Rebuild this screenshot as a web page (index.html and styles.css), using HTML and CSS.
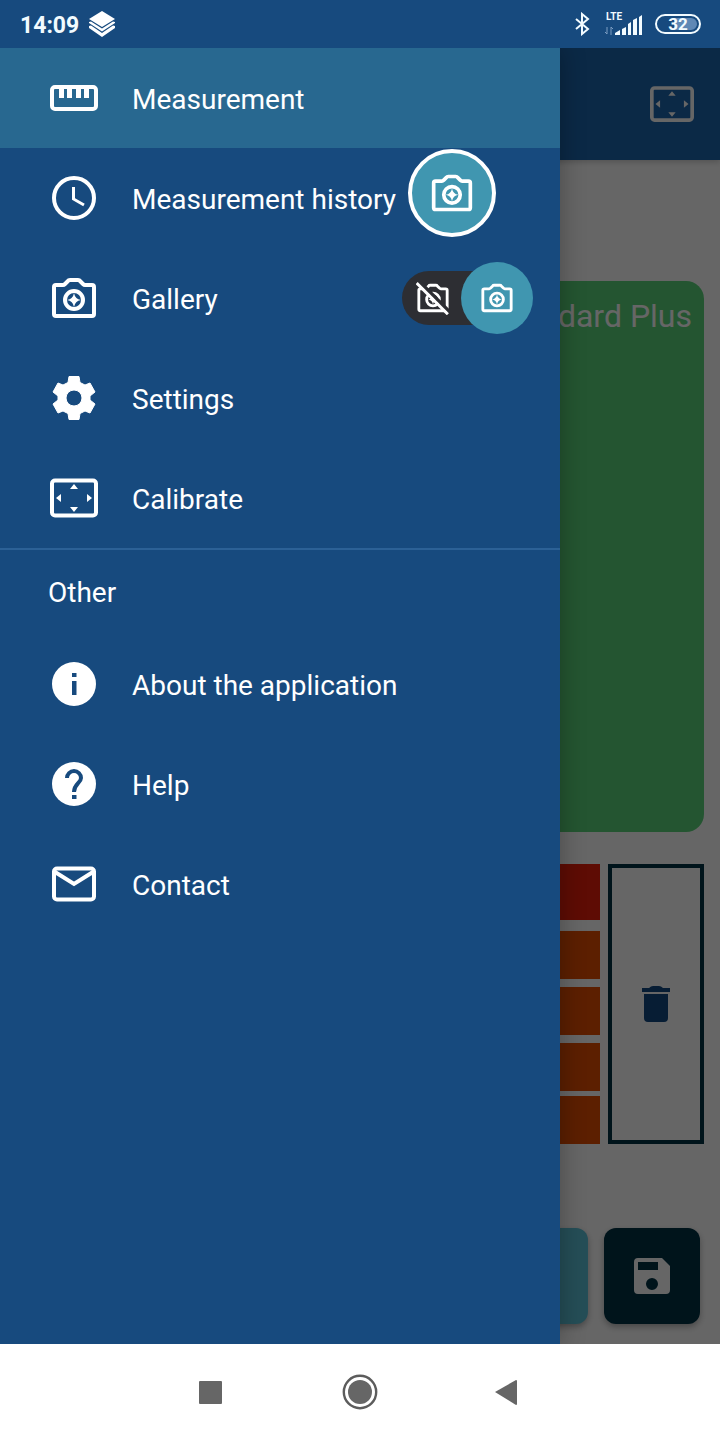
FILE: index.html
```
<!DOCTYPE html>
<html lang="en">
<head>
  <meta charset="UTF-8">
  <meta name="viewport" content="width=device-width, initial-scale=1.0">
  <title>Measurement</title>
  <link rel="stylesheet" href="styles.css">
</head>
<body>
  <!-- Shared icons -->
  <svg class="icon-defs" aria-hidden="true">
    <symbol id="icon-camera" viewBox="0 0 48 48">
      <path d="M6 11H13Q14 11 15 10L18 7Q18.500 6 20 6H28Q29.500 6 30 7L33 10Q34 11 35 11H42Q44 11 44 13V40Q44 42 42 42H6Q4 42 4 40V13Q4 11 6 11Z" fill="none" stroke="currentColor" stroke-width="4" stroke-linejoin="round"/>
      <circle cx="24" cy="26" r="9" fill="none" stroke="currentColor" stroke-width="4"/>
      <path d="M24 19Q25 25 31 26Q25 27 24 33Q23 27 17 26Q23 25 24 19Z" fill="currentColor"/>
    </symbol>
    <symbol id="icon-calibrate" viewBox="0 0 48 48">
      <rect x="2" y="6.500" width="44" height="35" rx="3" fill="none" stroke="currentColor" stroke-width="4"/>
      <path d="M24 10L28 15H20ZM24 38L28 33H20ZM6 24L11 20V28ZM42 24L37 20V28Z" fill="currentColor"/>
    </symbol>
  </svg>

  <div class="status-bar">
    <span class="clock">14:09</span>
    <svg class="layers-icon" viewBox="0 0 26 26" aria-hidden="true">
      <path d="M13 0L26 8L13 16L0 8Z"/>
      <path d="M0 11L2 10.500L13 17.500L24 10.500L26 11V12L13 20.500L0 12Z"/>
      <path d="M0 15L2 14.500L13 22L24 14.500L26 15V17L13 26L0 17Z"/>
    </svg>
    <div class="status-icons">
      <svg class="bluetooth-icon" viewBox="0 0 18 24" aria-hidden="true">
        <path d="M1 7L13 17L7 22V2L13 7L1 17" fill="none" stroke="currentColor" stroke-width="2"/>
      </svg>
      <svg class="signal-icon" viewBox="0 0 38 24" aria-hidden="true">
        <text x="1" y="8" class="signal-text">LTE</text>
        <path d="M10 23V21L15 18V23ZM17 23V17L21 15V23ZM23 23V12L26 10V23ZM28 23V8L32 6V23ZM34 23V5L37 3V23Z" fill="currentColor"/>
        <path d="M2 15V22L0 20M6 23V15L8 17" fill="none" stroke="#7c9dc2" stroke-width="1"/>
      </svg>
      <span class="battery">32</span>
    </div>
  </div>

  <div class="screen">
    <div class="page">
      <header class="app-bar">
        <button class="app-bar-button" aria-label="Calibrate">
          <svg viewBox="0 0 48 48"><use href="#icon-calibrate"/></svg>
        </button>
      </header>

      <main class="content">
        <section class="result-card">Standard Plus</section>

        <section class="readings">
          <div class="reading-list">
            <div class="reading current"></div>
            <div class="reading-group">
              <div class="reading"></div>
              <div class="reading"></div>
              <div class="reading"></div>
            </div>
            <div class="reading"></div>
          </div>
          <button class="delete-button" aria-label="Delete">
            <svg viewBox="0 0 28 36">
              <path d="M0 2H7Q9 0 11 0H17Q19 0 21 2H28V6H0ZM2 8H26V32Q26 36 22 36H6Q2 36 2 32Z" fill="currentColor"/>
            </svg>
          </button>
        </section>

        <div class="page-actions">
          <button class="measure-button" aria-label="Measure"></button>
          <button class="save-button" aria-label="Save">
            <svg viewBox="0 0 36 36">
              <path fill-rule="evenodd" d="M4 0H28L36 8V32Q36 36 32 36H4Q0 36 0 32V4Q0 0 4 0ZM4 4V12H24V4ZM18 20A6 6 0 1 0 18 32A6 6 0 1 0 18 20Z" fill="currentColor"/>
            </svg>
          </button>
        </div>
      </main>
    </div>

    <div class="scrim"></div>

    <nav class="drawer">
      <ul class="menu">
        <li class="menu-item active">
          <a href="#measurement">
            <svg viewBox="0 0 48 48" aria-hidden="true">
              <rect x="2" y="13" width="44" height="22" rx="3" fill="none" stroke="currentColor" stroke-width="4"/>
              <path d="M9 14H14V24H9ZM17 14H22V24H17ZM26 14H31V24H26ZM34 14H39V24H34Z" fill="currentColor"/>
            </svg>
            <span>Measurement</span>
          </a>
        </li>
        <li class="menu-item">
          <a href="#history">
            <svg viewBox="0 0 48 48" aria-hidden="true">
              <circle cx="24" cy="24" r="20" fill="none" stroke="currentColor" stroke-width="4"/>
              <path d="M23.500 13V25L34 31" fill="none" stroke="currentColor" stroke-width="3"/>
            </svg>
            <span>Measurement history</span>
          </a>
          <button class="camera-button" aria-label="Take a photo">
            <svg viewBox="0 0 48 48"><use href="#icon-camera"/></svg>
          </button>
        </li>
        <li class="menu-item">
          <a href="#gallery">
            <svg viewBox="0 0 48 48" aria-hidden="true"><use href="#icon-camera"/></svg>
            <span>Gallery</span>
          </a>
          <label class="camera-switch">
            <input type="checkbox" aria-label="Camera" checked>
            <span class="switch-track">
              <svg viewBox="0 0 48 48">
                <use href="#icon-camera"/>
                <path d="M5 1L48 44" stroke="#2d2e33" stroke-width="5"/>
                <path d="M1 3L45 47" stroke="currentColor" stroke-width="4"/>
              </svg>
            </span>
            <span class="switch-thumb">
              <svg viewBox="0 0 48 48"><use href="#icon-camera"/></svg>
            </span>
          </label>
        </li>
        <li class="menu-item">
          <a href="#settings">
            <svg viewBox="0 0 48 48" aria-hidden="true">
              <path fill-rule="evenodd" d="M19 2.500H29L30 8.500L35 11L40 9L45 18L40 22V26L45 30L40 39L35 37L30 39.500L29 45.500H19L18 39.500L13 37L8 39L3 30L8 26V22L3 18L8 9L13 11L18 8.500ZM24 16A8 8 0 1 0 24 32A8 8 0 1 0 24 16Z" fill="currentColor" stroke="currentColor" stroke-width="1" stroke-linejoin="round"/>
            </svg>
            <span>Settings</span>
          </a>
        </li>
        <li class="menu-item">
          <a href="#calibrate">
            <svg viewBox="0 0 48 48" aria-hidden="true"><use href="#icon-calibrate"/></svg>
            <span>Calibrate</span>
          </a>
        </li>
      </ul>

      <h2 class="menu-title">Other</h2>
      <ul class="menu">
        <li class="menu-item">
          <a href="#about">
            <svg viewBox="0 0 48 48" aria-hidden="true">
              <path fill-rule="evenodd" d="M24 2A22 22 0 1 0 24 46A22 22 0 1 0 24 2ZM22 13H26.500V17H22ZM22 21H26.500V35H22Z" fill="currentColor"/>
            </svg>
            <span>About the application</span>
          </a>
        </li>
        <li class="menu-item">
          <a href="#help">
            <svg viewBox="0 0 48 48" aria-hidden="true">
              <circle cx="24" cy="24" r="22" fill="currentColor"/>
              <path d="M17 18A7 7 0 0 1 31 18C31 23 24 24 24 32" fill="none" stroke="#174a7e" stroke-width="4"/>
              <path d="M22 35H26.500V39H22Z" fill="#174a7e"/>
            </svg>
            <span>Help</span>
          </a>
        </li>
        <li class="menu-item">
          <a href="#contact">
            <svg viewBox="0 0 48 48" aria-hidden="true">
              <rect x="4" y="8.500" width="40" height="31" rx="3" fill="none" stroke="currentColor" stroke-width="4"/>
              <path d="M5 12L24 24L43 12" fill="none" stroke="currentColor" stroke-width="4"/>
            </svg>
            <span>Contact</span>
          </a>
        </li>
      </ul>
    </nav>
  </div>

  <div class="system-nav">
    <button aria-label="Recent apps">
      <svg viewBox="0 0 36 36"><rect x="7" y="7" width="23" height="23" rx="1"/></svg>
    </button>
    <button aria-label="Home">
      <svg viewBox="0 0 36 36">
        <circle cx="18" cy="18" r="16.200" fill="none" stroke="#5c5c5c" stroke-width="2.400"/>
        <circle cx="18" cy="18" r="12"/>
      </svg>
    </button>
    <button aria-label="Back">
      <svg viewBox="0 0 36 36"><path d="M3 18L24 6Q25 6 25 7V30Q25 31 24 31Z"/></svg>
    </button>
  </div>
</body>
</html>
```
FILE: styles.css
```
* {
  box-sizing: border-box;
}

body {
  display: flex;
  flex-direction: column;
  min-height: 100vh;
  margin: 0;
  font-family: Roboto, "Liberation Sans", sans-serif;
  background-color: #fff;
}

button {
  display: flex;
  align-items: center;
  justify-content: center;
  padding: 0;
  border: none;
  background: none;
  cursor: pointer;
}

svg {
  display: block;
  flex-shrink: 0;
}

.icon-defs {
  position: absolute;
  width: 0;
  height: 0;
}

/* Status bar */
.status-bar {
  display: flex;
  align-items: center;
  height: 48px;
  padding: 0 19px 0 20px;
  background-color: #174a7e;
  color: #f2fbff;
}

.clock {
  padding-top: 2px;
  font-size: 23px;
  font-weight: bold;
}

.layers-icon {
  width: 26px;
  height: 26px;
  margin-left: 10px;
  fill: #fff;
}

.status-icons {
  display: flex;
  align-items: center;
  gap: 12px;
  margin-left: auto;
}

.bluetooth-icon {
  width: 18px;
  height: 24px;
}

.signal-icon {
  width: 38px;
  height: 24px;
}

.signal-text {
  font-size: 10px;
  font-weight: bold;
  fill: #f2fbff;
}

.battery {
  width: 46px;
  height: 20px;
  border: 2px solid #f2fbff;
  border-radius: 10px;
  box-shadow: inset 0 0 0 2px #174a7e;
  background: linear-gradient(to right, #174a7e 40%, #5f88b5 40%);
  font-size: 17px;
  font-weight: bold;
  line-height: 16px;
  text-align: center;
}

/* Measurement page */
.screen {
  position: relative;
  display: flex;
  flex: 1;
  overflow: hidden;
}

.page {
  display: flex;
  flex: 1;
  flex-direction: column;
  background-color: #fff;
}

.app-bar {
  display: flex;
  align-items: center;
  justify-content: flex-end;
  height: 112px;
  padding: 0 26px;
  background-color: #1d66ae;
  box-shadow: 0 2px 6px rgba(0, 0, 0, 0.2);
}

.app-bar-button {
  color: #fff;
}

.app-bar-button svg {
  width: 44px;
  height: 44px;
}

.content {
  display: flex;
  flex: 1;
  flex-direction: column;
  padding: 121px 16px 20px;
}

.result-card {
  flex: 1;
  padding: 16px 12px;
  border-radius: 18px;
  background-color: #5ad47a;
  color: #fff;
  font-size: 32px;
  line-height: 38px;
  text-align: right;
}

.readings {
  display: flex;
  gap: 8px;
  margin-top: 32px;
}

.reading-list {
  flex: 1;
}

.reading {
  height: 48px;
  background-color: #e64e00;
}

.reading.current {
  height: 56px;
  background-color: #eb1e0a;
}

.reading-group {
  display: flex;
  flex-direction: column;
  gap: 8px;
  margin: 11px 0 5px;
}

.delete-button {
  width: 96px;
  border: 4px solid #003244;
  color: #124a82;
}

.delete-button svg {
  width: 28px;
  height: 36px;
}

.page-actions {
  display: flex;
  gap: 16px;
  margin-top: 84px;
  padding-right: 4px;
}

.measure-button,
.save-button {
  height: 96px;
  border-radius: 12px;
  box-shadow: 0 3px 6px rgba(0, 0, 0, 0.3);
}

.measure-button {
  flex: 1;
  background-color: #5dc3da;
}

.save-button {
  width: 96px;
  background-color: #003244;
  color: #fff;
}

.save-button svg {
  width: 36px;
  height: 36px;
}

.scrim {
  position: absolute;
  inset: 0;
  background-color: rgba(0, 0, 0, 0.6);
}

/* Drawer */
.drawer {
  position: absolute;
  top: 0;
  bottom: 0;
  left: 0;
  width: 560px;
  max-width: 85%;
  background-color: #174a7e;
  box-shadow: 0 0 24px rgba(0, 0, 0, 0.3);
  color: #fff;
}

.menu {
  margin: 0;
  padding: 0;
  list-style: none;
}

.menu-item {
  display: flex;
  align-items: center;
  height: 100px;
}

.menu-item.active {
  background-color: #286890;
}

.menu-item a {
  display: flex;
  flex: 1;
  align-items: center;
  gap: 34px;
  height: 100%;
  padding-left: 50px;
  color: #fff;
  font-size: 28px;
  line-height: 36px;
  text-decoration: none;
  white-space: nowrap;
}

.menu-item a svg {
  width: 48px;
  height: 48px;
}

.menu-item a span {
  padding-top: 4px;
}

.menu-title {
  margin: 0;
  padding: 25px 48px 23px;
  border-top: 2px solid #2c6196;
  font-size: 28px;
  font-weight: normal;
  line-height: 36px;
}

.camera-button {
  width: 88px;
  height: 88px;
  margin: 0 64px 10px 0;
  border: 4px solid #fff;
  border-radius: 50%;
  background-color: #4096b0;
  color: #fff;
}

.camera-button svg {
  width: 44px;
  height: 44px;
}

.camera-switch {
  position: relative;
  display: flex;
  align-items: center;
  margin-right: 27px;
  cursor: pointer;
}

.camera-switch input {
  position: absolute;
  inset: 0;
  width: 100%;
  height: 100%;
  margin: 0;
  opacity: 0;
  cursor: pointer;
}

.switch-track {
  display: flex;
  align-items: center;
  width: 95px;
  height: 54px;
  margin-right: -36px;
  padding-left: 14px;
  border-radius: 27px;
  background-color: #2d2e33;
}

.switch-thumb {
  display: flex;
  align-items: center;
  justify-content: center;
  width: 72px;
  height: 72px;
  border-radius: 50%;
  background-color: #4096b0;
}

.camera-switch svg {
  width: 34px;
  height: 34px;
}

/* System navigation */
.system-nav {
  display: flex;
  align-items: center;
  justify-content: center;
  height: 96px;
  background-color: #fff;
}

.system-nav button {
  width: 150px;
  height: 96px;
}

.system-nav svg {
  width: 36px;
  height: 36px;
  fill: #666;
}
```
